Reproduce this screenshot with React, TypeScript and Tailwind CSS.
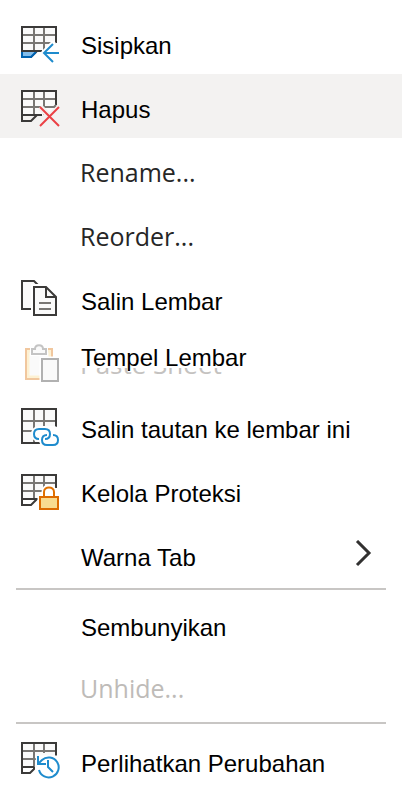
import type { ReactNode } from 'react'

const SheetGrid = ({ edge = 18, tab = 'none' }: { edge?: number; tab?: string }) => (
  <>
    <path d="M2 3H36V27H2Z" fill="#fafafa" />
    <path d="M14 3V27M24 3V27M2 11H36M2 19H36" stroke="#797774" strokeWidth="2" />
    <path d="M2 27H17L11 33H2Z" fill={tab} />
    <path d={`M36 ${edge}V3H2V33H11L17 27M2 27H22`} stroke="#3b3a39" strokeWidth="2" />
  </>
)

const Icon = ({ children }: { children: ReactNode }) => (
  <svg viewBox="0 0 40 40" fill="none" className="h-10 w-10" aria-hidden="true">
    {children}
  </svg>
)

const InsertIcon = () => (
  <Icon>
    <SheetGrid edge={19} />
    <path d="M24 29L33 20V38Z" fill="#fff" stroke="#fff" strokeWidth="6" strokeLinejoin="round" />
    <path d="M2 28H16L11 33H2Z" fill="#83beec" />
    <path d="M2 28V33H11L16 28" stroke="#0063b1" strokeWidth="2" />
    <path d="M1 27H20" stroke="#3b3a39" strokeWidth="2" />
    <path d="M39 29H24M33 20L24 29L33 38" stroke="#1e8bcd" strokeWidth="2" />
  </Icon>
)

const DeleteIcon = () => (
  <Icon>
    <SheetGrid edge={17} />
    <path d="M20 19L39 38M39 19L20 38" stroke="#f3f2f1" strokeWidth="6" />
    <path d="M26 19H34L36 17" stroke="#797774" strokeWidth="2" />
    <path d="M20 19L39 38M39 19L20 38" stroke="#eb4145" strokeWidth="2" />
  </Icon>
)

const CopyIcon = () => (
  <Icon>
    <path d="M11 29H2V1H14L18 5" fill="#fafafa" stroke="#3b3a39" strokeWidth="2" />
    <path d="M14 7H27L36 16V35H14Z" fill="#fafafa" stroke="#fff" strokeWidth="6" />
    <path d="M14 7H26L36 17V35H14Z" fill="#fafafa" stroke="#3b3a39" strokeWidth="2" />
    <path d="M26 7V17H36" stroke="#3b3a39" strokeWidth="2" />
    <path d="M19 23H31M19 29H31" stroke="#797774" strokeWidth="2" />
  </Icon>
)

const PasteIcon = () => (
  <Icon>
    <path d="M8 7H30V33H8Z" fill="#fafafa" stroke="#fdf1d3" strokeWidth="3" />
    <path d="M6 5H32V35H6Z" stroke="#f1c79e" strokeWidth="2" />
    <path d="M12 10V6H15C15 0 23 0 23 6H26V10Z" fill="#fff" stroke="#fff" strokeWidth="4" />
    <path d="M12 10V5H15C15 0 23 0 23 5H26V10Z" fill="#fafafa" stroke="#c4c4c4" strokeWidth="2" />
    <path d="M22 15H38V37H22Z" fill="#fff" stroke="#fff" strokeWidth="5" />
    <path d="M22 15H38V37H22Z" fill="#fafafa" stroke="#b1b1b1" strokeWidth="2" />
  </Icon>
)

const LinkIcon = () => (
  <Icon>
    <path d="M2 1H36V35H2Z" fill="#fafafa" />
    <path d="M14 1V35M24 1V35M2 13H36M2 23H36" stroke="#797774" strokeWidth="2" />
    <path d="M36 35V1H2V35H36" stroke="#3b3a39" strokeWidth="2" />
    <path d="M19 26H33M27 32H38" stroke="#fff" strokeWidth="16" strokeLinecap="round" />
    <path
      d="M19 31C16 31 14 29 14 26C14 23 16 21 19 21H25C28 21 30 23 30 26C30 29 28 31 25 31"
      stroke="#1e8bcd"
      strokeWidth="2"
    />
    <path
      d="M27 27C24 27 22 29 22 32C22 35 24 37 27 37H33C36 37 38 35 38 32C38 29 36 27 33 27"
      stroke="#1e8bcd"
      strokeWidth="2"
    />
  </Icon>
)

const LockIcon = () => (
  <Icon>
    <SheetGrid edge={16} />
    <path d="M20 25H38V37H20ZM24 24V20C24 13 34 13 34 20V24Z" fill="#fff" stroke="#fff" strokeWidth="5" />
    <path d="M24 24V20C24 14 34 14 34 20V24" stroke="#e07000" strokeWidth="2" />
    <path d="M20 25H38V37H20Z" fill="#f8db8f" stroke="#dc6b00" strokeWidth="2" />
  </Icon>
)

const HistoryIcon = () => (
  <Icon>
    <path d="M2 1H36V25H2Z" fill="#fafafa" />
    <path d="M14 1V25M24 1V11M2 9H36M2 17H16" stroke="#797774" strokeWidth="2" />
    <path d="M36 14V1H2V31H10L14 27V25M2 25H14" stroke="#3b3a39" strokeWidth="2" />
    <path d="M17 15H36V34H20Z" fill="#fff" stroke="#fff" strokeWidth="3" />
    <path d="M18 14V22H26M18 22L22 18A10 10 0 1 1 19 28" stroke="#1e8bcd" strokeWidth="2" />
    <path d="M28 18V25L33 30" stroke="#1e8bcd" strokeWidth="2" />
  </Icon>
)

interface MenuItemProps {
  label: string
  icon?: ReactNode
  className?: string
  labelClass?: string
  ghost?: string
  submenu?: boolean
  disabled?: boolean
}

const sans = "pt-2 pl-px leading-8 font-['Liberation_Sans',Arial,sans-serif] text-[24px] text-black"
const ui = "pt-1 leading-8 font-['Open_Sans','Noto_Sans',sans-serif] text-[25px] text-[#262626]"

function MenuItem({ label, icon, className = 'h-16', labelClass = sans, ghost, submenu, disabled }: MenuItemProps) {
  return (
    <button
      type="button"
      role="menuitem"
      disabled={disabled}
      aria-haspopup={submenu ? 'menu' : undefined}
      className={`flex w-full items-center gap-5 pr-7 pl-5 text-left ${className}`}
    >
      <span className="mt-1 h-10 w-10 shrink-0">{icon}</span>
      <span className="relative flex-1">
        {ghost && (
          <span
            aria-hidden="true"
            className="absolute top-0 left-0 font-['Open_Sans','Noto_Sans',sans-serif] text-[26px] leading-8 whitespace-nowrap text-[#c4c2c0]"
          >
            {ghost}
          </span>
        )}
        <span className={`relative block whitespace-nowrap ${labelClass}`}>{label}</span>
      </span>
      {submenu && (
        <svg viewBox="0 0 20 28" fill="none" className="h-7 w-5" aria-hidden="true">
          <path d="M3 1L15 13L3 25" stroke="#323130" strokeWidth="3" />
        </svg>
      )}
    </button>
  )
}

const Divider = () => <hr className="mx-4 border-t-2 border-[#c8c6c4]" />

export default function App() {
  return (
    <div role="menu" className="flex min-h-screen w-full flex-col bg-white pt-[10px]">
      <div className="pb-0.5">
        <MenuItem label="Sisipkan" icon={<InsertIcon />} />
        <MenuItem label="Hapus" icon={<DeleteIcon />} className="h-16 bg-[#f3f2f1]" />
        <MenuItem label="Rename..." labelClass={ui} />
        <MenuItem label="Reorder..." labelClass={ui} />
        <MenuItem label="Salin Lembar" icon={<CopyIcon />} />
        <MenuItem
          label="Tempel Lembar"
          icon={<PasteIcon />}
          ghost="Paste Sheet"
          labelClass="mb-2 bg-white pl-px font-['Liberation_Sans',Arial,sans-serif] text-[24px] leading-5 text-black"
        />
        <MenuItem label="Salin tautan ke lembar ini" icon={<LinkIcon />} />
        <MenuItem label="Kelola Proteksi" icon={<LockIcon />} />
        <MenuItem label="Warna Tab" submenu />
      </div>
      <Divider />
      <div className="py-1.5">
        <MenuItem
          label="Sembunyikan"
          labelClass="pl-px font-['Liberation_Sans',Arial,sans-serif] text-[24px] leading-8 text-black"
        />
        <MenuItem
          label="Unhide..."
          disabled
          className="h-14"
          labelClass="font-['Open_Sans','Noto_Sans',sans-serif] text-[25px] leading-8 text-[#bebbb8]"
        />
      </div>
      <Divider />
      <div className="pt-2">
        <MenuItem label="Perlihatkan Perubahan" icon={<HistoryIcon />} className="h-14" />
      </div>
    </div>
  )
}
